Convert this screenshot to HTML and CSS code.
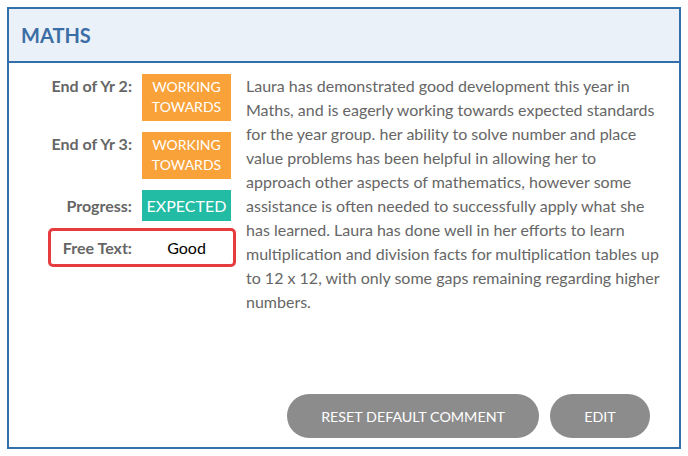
FILE: index.html
```html
<!DOCTYPE html>
<html lang="en">
<head>
    <meta charset="UTF-8">
    <meta name="viewport" content="width=device-width, initial-scale=1.0">
    <title>Maths Report</title>
    <link rel="stylesheet" href="styles.css">
</head>
<body>
    <div class="panel">
        <div class="panel-heading">MATHS</div>
        <div class="panel-body">
            <div class="content">
                <div class="grades">
                    <div class="label">End of Yr 2:</div>
                    <div class="badge orange">WORKING TOWARDS</div>
                    <div class="label">End of Yr 3:</div>
                    <div class="badge orange">WORKING TOWARDS</div>
                    <div class="label">Progress:</div>
                    <div class="badge teal big">EXPECTED</div>
                    <div class="free-text">
                        <div class="label">Free Text:</div>
                        <div class="free-value">Good</div>
                    </div>
                </div>
                <p class="comment">Laura has demonstrated good development this year in Maths, and is eagerly working towards expected standards for the year group. her ability to solve number and place value problems has been helpful in allowing her to approach other aspects of mathematics, however some assistance is often needed to successfully apply what she has learned. Laura has done well in her efforts to learn multiplication and division facts for multiplication tables up to 12 x 12, with only some gaps remaining regarding higher numbers.</p>
            </div>
            <div class="actions">
                <button class="btn">RESET DEFAULT COMMENT</button>
                <button class="btn edit">EDIT</button>
            </div>
        </div>
    </div>
</body>
</html>
```
FILE: styles.css
```css
body {
    margin: 0;
    padding: 7px;
    font-family: Lato, "Open Sans", sans-serif;
    background-color: #fff;
}
.panel {
    border: 2px solid #336fa8;
    height: 438px;
    display: flex;
    flex-direction: column;
}
.panel-heading {
    background-color: #ebf1f9;
    border-bottom: 2px solid #336fa8;
    color: #3b6ea5;
    font-weight: bold;
    font-size: 20px;
    height: 52px;
    line-height: 52px;
    padding-left: 12px;
}
.panel-body {
    flex: 1;
    display: flex;
    flex-direction: column;
    justify-content: space-between;
    padding: 11px 0 9px 0;
}
.content {
    display: flex;
}
.grades {
    display: grid;
    grid-template-columns: 123px 89px;
    column-gap: 10px;
    row-gap: 11px;
    align-items: baseline;
    align-content: start;
    flex-shrink: 0;
    width: 237px;
}
.label {
    text-align: right;
    font-weight: bold;
    font-size: 16px;
    color: #666;
}
.badge {
    color: #fff;
    font-size: 14px;
    line-height: 20px;
    text-align: center;
    padding: 3px 4px 4px;
}
.badge.big {
    font-size: 16px;
    line-height: 23px;
    padding: 4px 2px;
}
.orange {
    background-color: #f9a23a;
}
.teal {
    background-color: #22bba4;
}
.free-text {
    grid-column: 1 / 3;
    display: grid;
    grid-template-columns: 81px 89px;
    column-gap: 10px;
    align-items: center;
    margin: -4px 0 0 39px;
    width: 182px;
    height: 33px;
    border: 3px solid #e63b3f;
    border-radius: 5px;
}
.free-value {
    text-align: center;
    font-size: 16px;
    color: #000;
}
.comment {
    margin: 0;
    width: 414px;
    font-size: 16px;
    line-height: 24px;
    color: #666;
}
.actions {
    display: flex;
    justify-content: flex-end;
    gap: 11px;
    padding-right: 29px;
}
.btn {
    background-color: #8c8c8c;
    color: #fff;
    border: none;
    border-radius: 22px;
    height: 44px;
    padding: 0 34px;
    font-family: inherit;
    font-size: 14.3px;
    cursor: pointer;
}
.btn.edit {
    width: 100px;
    padding: 0;
}
```
